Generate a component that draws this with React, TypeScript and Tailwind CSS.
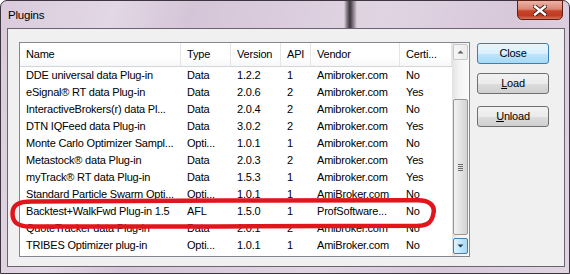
import React from "react";

const rows: [string, string, string, string, string, string][] = [
  ["DDE universal data Plug-in", "Data", "1.2.2", "1", "Amibroker.com", "No"],
  ["eSignal® RT data Plug-in", "Data", "2.0.6", "2", "Amibroker.com", "Yes"],
  ["InteractiveBrokers(r) data Pl...", "Data", "2.0.4", "2", "Amibroker.com", "No"],
  ["DTN IQFeed data Plug-in", "Data", "3.0.2", "2", "Amibroker.com", "Yes"],
  ["Monte Carlo Optimizer Sampl...", "Opti...", "1.0.1", "1", "Amibroker.com", "No"],
  ["Metastock® data Plug-in", "Data", "2.0.3", "2", "Amibroker.com", "Yes"],
  ["myTrack® RT data Plug-in", "Data", "1.5.3", "1", "Amibroker.com", "Yes"],
  ["Standard Particle Swarm Opti...", "Opti...", "1.0.1", "1", "AmiBroker.com", "No"],
  ["Backtest+WalkFwd Plug-in 1.5", "AFL", "1.5.0", "1", "ProfSoftware...", "No"],
  ["QuoteTracker data Plug-in", "Data", "2.0.1", "2", "Amibroker.com", "No"],
  ["TRIBES Optimizer plug-in", "Opti...", "1.0.1", "1", "AmiBroker.com", "No"],
];

const widths = ["w-[161px]", "w-[50px]", "w-[50px]", "w-[30px]", "w-[89px]", "w-[52px]"];
const headers = ["Name", "Type", "Version", "API", "Vendor", "Certi..."];

export default function App() {
  return (
    <div className="relative w-[570px] h-[275px] overflow-hidden font-['Liberation_Sans',Arial,sans-serif] text-[11px] tracking-[-0.2px] text-black">
      <div className="flex flex-col w-[570px] h-[274px] rounded-t-[7px] border border-[#3d3640] bg-[#d3c2d6] bg-[linear-gradient(105deg,rgba(255,255,255,0.15)_0%,rgba(255,255,255,0.35)_18%,rgba(255,255,255,0.05)_30%,rgba(255,255,255,0.3)_60%,rgba(255,255,255,0.1)_80%,rgba(255,255,255,0.3)_100%)]">
        {/* title bar */}
        <div className="flex h-[27px] items-start justify-between bg-[linear-gradient(to_right,transparent_343px,rgba(50,40,50,0.55)_346px,rgba(30,25,30,0.85)_349px,rgba(50,40,50,0.55)_352px,transparent_356px)]">
          <div className="pl-[7px] pt-[7px] leading-[14px] text-[11.5px]">Plugins</div>
          <div className="mr-[6px] mt-[-1px] flex h-[20px] w-[46px] items-center justify-center rounded-b-[5px] border border-[#5b1f16] bg-[linear-gradient(to_bottom,#eab3a6_0%,#dc8673_45%,#c7442c_55%,#c0391f_80%,#d4735a_100%)]">
            <svg width="14" height="11" viewBox="0 0 14 11">
              <path d="M2 1.5 L12 9.5 M12 1.5 L2 9.5" stroke="#3a1510" strokeWidth="4.2" strokeLinecap="square" />
              <path d="M2 1.5 L12 9.5 M12 1.5 L2 9.5" stroke="#ffffff" strokeWidth="2.4" strokeLinecap="square" />
            </svg>
          </div>
        </div>
        {/* client area */}
        <div className="ml-[6px] w-[558px] h-[239px] border border-[#6b6470] bg-[#f0f0f0] flex pl-[11px] pt-[13px]">
          {/* list view */}
          <div className="flex w-[451px] h-[215px] border border-[#828790] bg-white">
            <div className="flex flex-col w-[432px]">
              <div className="flex h-[24px] border-b border-[#d5d5d5] bg-[linear-gradient(to_bottom,#ffffff_0%,#ffffff_60%,#f6f7f9_100%)]">
                {headers.map((h, i) => (
                  <div key={h} className={`${widths[i]} flex items-center pl-[6px] border-r border-[#e5e5e5]`}>
                    {h}
                  </div>
                ))}
              </div>
              {rows.map((r, ri) => (
                <div key={ri} className="flex h-[17px] items-center">
                  {r.map((c, ci) => (
                    <div key={ci} className={`${widths[ci]} pl-[6px] whitespace-nowrap overflow-hidden leading-[17px]`}>
                      {c}
                    </div>
                  ))}
                </div>
              ))}
            </div>
            {/* scrollbar */}
            <div className="flex flex-col w-[17px] items-center bg-[linear-gradient(to_right,#e2e2e2,#f3f3f3_40%,#fbfbfb)]">
              <div className="mt-[1px] flex h-[16px] w-[15px] items-center justify-center rounded-[2px] border border-[#c8c8c8] bg-[linear-gradient(to_right,#f6f6f6,#ececec)]">
                <svg width="7" height="4" viewBox="0 0 7 4">
                  <path d="M0.5 3.5 L3.5 0.5 L6.5 3.5 Z" fill="#606060" />
                </svg>
              </div>
              <div className="mt-[39px] flex h-[136px] w-[15px] items-center justify-center rounded-[2px] border border-[#979797] bg-[linear-gradient(to_right,#f2f2f2,#e3e3e3_50%,#d3d3d3)]">
                <div className="flex flex-col gap-[1px]">
                  <div className="h-[1px] w-[5px] bg-[#6a6a6a]" />
                  <div className="h-[1px] w-[5px] bg-[#6a6a6a]" />
                  <div className="h-[1px] w-[5px] bg-[#6a6a6a]" />
                  <div className="h-[1px] w-[5px] bg-[#6a6a6a]" />
                </div>
              </div>
              <div className="flex-1" />
              <div className="mb-[2px] flex h-[16px] w-[15px] items-center justify-center rounded-[2px] border border-[#3c7fb1] bg-[linear-gradient(to_right,#e4f4fc,#c4e6f8_50%,#a9d9f2)]">
                <svg width="7" height="4" viewBox="0 0 7 4">
                  <path d="M0.5 0.5 L3.5 3.5 L6.5 0.5 Z" fill="#1f3d5a" />
                </svg>
              </div>
            </div>
          </div>
          {/* buttons */}
          <div className="ml-[7px] flex flex-col">
            <div className="mt-[1px] flex h-[21px] w-[72px] items-center justify-center rounded-[3px] border border-[#3c7fb1] bg-[linear-gradient(to_bottom,#e9f6fd_0%,#d9f0fc_50%,#bee6fd_51%,#a7d9f5_100%)]">
              Close
            </div>
            <div className="mt-[9px] flex h-[21px] w-[72px] items-center justify-center rounded-[3px] border border-[#707070] bg-[linear-gradient(to_bottom,#f2f2f2_0%,#ebebeb_50%,#dddddd_51%,#cfcfcf_100%)]">
              <span><span className="underline">L</span>oad</span>
            </div>
            <div className="mt-[12px] flex h-[21px] w-[72px] items-center justify-center rounded-[3px] border border-[#707070] bg-[linear-gradient(to_bottom,#f2f2f2_0%,#ebebeb_50%,#dddddd_51%,#cfcfcf_100%)]">
              <span><span className="underline">U</span>nload</span>
            </div>
          </div>
        </div>
      </div>
      {/* hand-drawn red highlight */}
      <svg className="pointer-events-none absolute left-0 top-0" width="570" height="275" viewBox="0 0 570 275">
        <path
          d="M 32 201.5 C 150 200, 300 200.5, 418 200.3 C 430 200.3, 435 206, 433.5 213 C 432 222, 428 225.5, 418 225.8 C 300 226.5, 150 226.5, 30 226.5 C 17 226.5, 12.5 222, 12.5 213.5 C 12.5 205, 18 201.5, 32 201.5 Z"
          fill="none"
          stroke="#e0161c"
          strokeWidth="4.5"
        />
      </svg>
    </div>
  );
}
